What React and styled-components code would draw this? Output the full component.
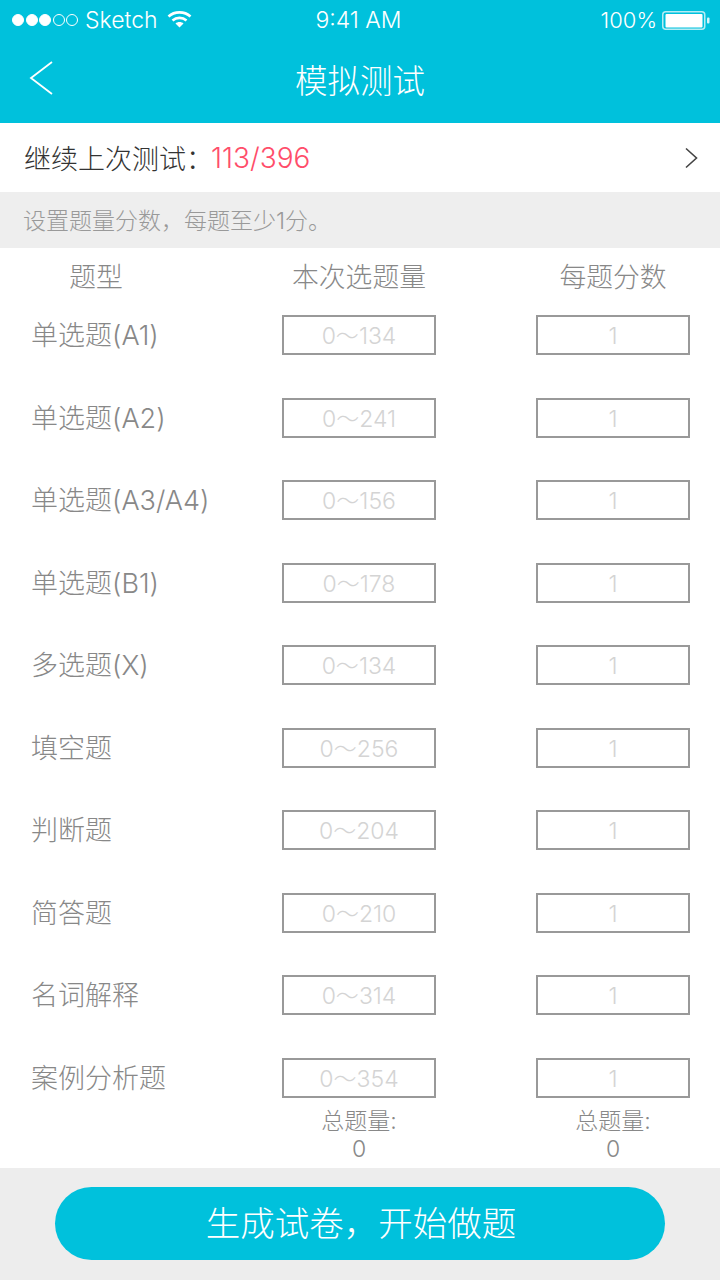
import React from 'react';
import styled, { createGlobalStyle } from 'styled-components';

const CJK = `"Inter", "Noto Sans CJK SC", sans-serif`;
const Global = createGlobalStyle`
  html, body { margin: 0; padding: 0; background: #fff; }
  * { box-sizing: border-box; }
  body { font-family: ${CJK}; }
`;
const Page = styled.div`
  width: 720px; height: 1280px; display: flex; flex-direction: column; overflow: hidden; background: #fff; font-family: ${CJK};
`;
const Header = styled.header`
  height: 123px; background: #00c1dc; color: #fff; display: flex; flex-direction: column; flex: none;
`;
const StatusBar = styled.div`
  height: 40px; display: grid; grid-template-columns: 1fr auto 1fr; align-items: center; padding: 0 10px 0 12px; font-size: 23px; font-weight: 300;
`;
const StatusLeft = styled.div`display: flex; align-items: center;`;
const Clock = styled.span`padding-right: 5px;`;
const StatusRight = styled.div`display: flex; align-items: center; justify-content: flex-end; gap: 5px; font-size: 22px;`;
const Dots = styled.div`display: flex; gap: 1.5px; margin-right: 7px;`;
const Dot = styled.span`
  width: 12px; height: 12px; border-radius: 50%; border: 1px solid #fff; background: ${p => (p.$on ? '#fff' : 'transparent')};
`;
const Wifi = styled.svg`margin-left: 9px; display: block; margin-top: -3px;`;
const NavBar = styled.div`
  height: 83px; padding-bottom: 0; position: relative; display: flex; align-items: center; justify-content: center;
`;
const Title = styled.h1`margin: 0; font-size: 32.5px; font-weight: 300; line-height: 40px;`;
const Back = styled.svg`position: absolute; left: 29px; top: 20px;`;
const Resume = styled.div`
  height: 69px; flex: none; display: flex; align-items: center; justify-content: space-between; padding: 0 22px 0 24px; font-size: 27px; color: #333; font-weight: 300;
`;
const ResumeText = styled.div`display: flex; align-items: center;`;
const Progress = styled.span`color: #ff4d6a; font-size: 28px; margin-left: -2px;`;
const Hint = styled.div`
  height: 56px; flex: none; background: #eeeeee; color: #999; font-size: 23px; line-height: 58px; padding-left: 23px; font-weight: 300;
`;
const Table = styled.div`flex: 1; min-height: 0; display: flex; flex-direction: column;`;
const Grid = styled.div`
  display: grid; grid-template-columns: 282px 154px 100px 154px;
`;
const HeadRow = styled(Grid)`height: 67px; align-items: start; padding-top: 11px; color: #888; font-size: 26.8px; line-height: 36px; font-weight: 300;`;
const HeadCell = styled.div`
  text-align: center; white-space: nowrap; padding-right: ${p => (p.$first ? '90px' : '0')};
`;
const Row = styled(Grid)`height: 82.5px; align-items: start;`;
const Label = styled.div`
  height: 40px; line-height: 42.5px; padding-left: 31px; color: #888; font-size: 27px; font-weight: 300; white-space: nowrap;
`;
const Box = styled.div`
  height: 40px; border: 2px solid #999; background: #fff; color: #d4d4d4; font-size: 23px; font-weight: 300; line-height: 38px; text-align: center; white-space: nowrap;
`;
const Spacer = styled.div``;
const Totals = styled(Grid)`margin-top: -33px;`;
const Total = styled.div`
  text-align: center; color: #888; font-size: 23px; line-height: 28px; font-weight: 300;
`;
const Footer = styled.div`
  height: 112px; flex: none; background: #ededed; padding: 19px 55px 0;
`;
const Submit = styled.button`
  width: 610px; height: 73px; border: 0; border-radius: 37px; background: #00c1dc; color: #fff; font-family: ${CJK}; font-size: 34.5px; font-weight: 300; padding: 0 0 6px 2px; display: block;
`;

const rows = [
  ['单选题(A1)', 134], ['单选题(A2)', 241], ['单选题(A3/A4)', 156], ['单选题(B1)', 178], ['多选题(X)', 134],
  ['填空题', 256], ['判断题', 204], ['简答题', 210], ['名词解释', 314], ['案例分析题', 354],
];

export default function App() {
  return (
    <Page>
      <Global />
      <Header>
        <StatusBar>
          <StatusLeft>
            <Dots>{[1, 1, 1, 0, 0].map((on, i) => <Dot key={i} $on={!!on} />)}</Dots>
            <span>Sketch</span>
            <Wifi width="25" height="18" viewBox="0 0 25 18" fill="none" stroke="#fff" strokeWidth="2.6">
              <path d="M1.5 6.5C7.5 1 17.5 1 23.5 6.5" />
              <path d="M5.5 10.5C9.5 7 15.5 7 19.5 10.5" />
              <path d="M12.5 17.5L8.5 13.5C10.5 11.5 14.5 11.5 16.5 13.5Z" fill="#fff" stroke="none" />
            </Wifi>
          </StatusLeft>
          <Clock>9:41 AM</Clock>
          <StatusRight>
            <span>100%</span>
            <svg width="48" height="19" viewBox="0 0 48 19" fill="none" style={{ display: 'block' }}>
              <rect x="0.75" y="0.75" width="42" height="17.5" rx="3" stroke="#b5ecf4" strokeWidth="1.5" />
              <rect x="3.5" y="3" width="37" height="13.5" rx="1" fill="#fff" />
              <rect x="45" y="6.5" width="2.5" height="6" rx="1" fill="#d5f5fa" />
            </svg>
          </StatusRight>
        </StatusBar>
        <NavBar>
          <Back width="26" height="36" viewBox="0 0 26 36" fill="none" stroke="#fff" strokeWidth="1.8">
            <path d="M23 2L2 18L23 34" />
          </Back>
          <Title>模拟测试</Title>
        </NavBar>
      </Header>
      <Resume>
        <ResumeText>继续上次测试：<Progress>113/396</Progress></ResumeText>
        <svg width="14" height="22" viewBox="0 0 14 22" fill="none" stroke="#444" strokeWidth="1.6" style={{ display: 'block' }}>
          <path d="M2 1.5L12.5 11L2 20.5" />
        </svg>
      </Resume>
      <Hint>设置题量分数，每题至少1分。</Hint>
      <Table>
        <HeadRow>
          <HeadCell $first>题型</HeadCell>
          <HeadCell>本次选题量</HeadCell>
          <Spacer />
          <HeadCell>每题分数</HeadCell>
        </HeadRow>
        {rows.map(([name, max]) => (
          <Row key={name}>
            <Label>{name}</Label>
            <Box>0～{max}</Box>
            <Spacer />
            <Box>1</Box>
          </Row>
        ))}
        <Totals>
          <Spacer />
          <Total>总题量:<br />0</Total>
          <Spacer />
          <Total>总题量:<br />0</Total>
        </Totals>
      </Table>
      <Footer>
        <Submit>生成试卷，开始做题</Submit>
      </Footer>
    </Page>
  );
}
